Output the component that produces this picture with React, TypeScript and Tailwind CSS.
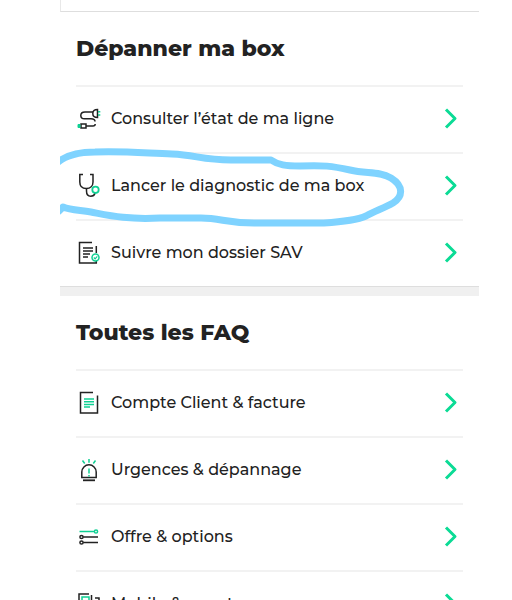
import type { ReactNode } from "react";

type FaqItem = {
  label: string;
  icon: ReactNode;
  highlighted?: boolean;
};

const INK = "#222222";
const GREEN = "#0fd093";

function Icon({ children }: { children: ReactNode }) {
  return (
    <svg
      viewBox="0 0 26 26"
      className="h-[26px] w-[26px] shrink-0"
      fill="none"
      stroke={INK}
      strokeWidth="1.5"
      aria-hidden="true"
    >
      {children}
    </svg>
  );
}

const CableIcon = (
  <Icon>
    <path d="M17 6H9C6 6 4.800 7.500 4.800 9.500s1.200 3.300 3.700 3.300H15c2.500 0 4 .7 4 2.800" />
    <path d="M21.500 3.500v8C18.500 11.500 16.800 10 16.800 7.500s1.700-4 4.700-4Z" />
    <path d="M22 5.800h2.300M22 9h2.300" stroke={GREEN} />
    <path d="M5 18h5v4H5zM10 20h7c1.500 0 2.200-.5 2.200-2" />
    <path d="M2 18.500h2v3H2z" fill={GREEN} stroke={GREEN} strokeWidth="1" />
  </Icon>
);

const StethoscopeIcon = (
  <Icon>
    <path d="M7 1.500H3.800V9c0 4 2.500 6.500 6.500 6.500S17 13 17 9V1.500h-3" />
    <path d="M10.500 15.500V18c0 3.500 1.500 5.200 4.200 5.200 2.300 0 3.800-1 4.300-3" />
    <circle cx="19.500" cy="16.800" r="3.200" stroke={GREEN} strokeWidth="1.800" />
  </Icon>
);

const FileCheckIcon = (
  <Icon>
    <path d="M16 2.500H3.500V23h16.800v-2M20.300 6v7M7 8h10M7 11h10M7 14h7M7 17h5" />
    <circle cx="19.500" cy="17.500" r="3.500" fill="white" stroke={GREEN} />
    <path d="m17.800 17.500 1.300 1.300 2.200-2.400" stroke={GREEN} strokeWidth="1.200" />
  </Icon>
);

const InvoiceIcon = (
  <Icon>
    <path d="M17 2.500H4.500V23h17V5.500" />
    <path d="M8 9h10M8 11.700h10M8 14.400h10M8 17h6" stroke={GREEN} />
  </Icon>
);

const SirenIcon = (
  <Icon>
    <path d="M5.800 20.500V15a7.200 7.200 0 0 1 14.400 0v5.500Z" />
    <path d="M7 23.300h12" strokeWidth="1.800" />
    <path
      d="M13 11.500v5M13 18v1.500M13 2v3.800M6.500 3.500l2.200 3M19.500 3.500l-2.200 3"
      stroke={GREEN}
    />
  </Icon>
);

const OptionsIcon = (
  <Icon>
    <path d="M3.500 7.500H18" stroke={GREEN} />
    <circle cx="20" cy="7.500" r="1.600" stroke={GREEN} />
    <circle cx="5.500" cy="13" r="1.600" />
    <circle cx="5.500" cy="18.500" r="1.600" />
    <path d="M7.200 13H22M7.200 18.500H22" />
  </Icon>
);

const DevicesIcon = (
  <Icon>
    <path d="M13 3H3v20.500h10M15.500 4v9M19 7h4v16.500h-7V11.500" />
    <path d="M6 13V6h7v7" stroke={GREEN} />
  </Icon>
);

const REPAIR_ITEMS: FaqItem[] = [
  { label: "Consulter l’état de ma ligne", icon: CableIcon },
  {
    label: "Lancer le diagnostic de ma box",
    icon: StethoscopeIcon,
    highlighted: true,
  },
  { label: "Suivre mon dossier SAV", icon: FileCheckIcon },
];

const FAQ_ITEMS: FaqItem[] = [
  { label: "Compte Client & facture", icon: InvoiceIcon },
  { label: "Urgences & dépannage", icon: SirenIcon },
  { label: "Offre & options", icon: OptionsIcon },
  { label: "Mobile & smart", icon: DevicesIcon },
];

// Hand-drawn marker loop, open on its left side
function MarkerLoop() {
  return (
    <svg
      viewBox="0 0 346 80"
      className="pointer-events-none absolute -left-4 -top-1.5 z-10 h-20 w-[346px]"
      fill="none"
      stroke="#7fd3ff"
      strokeWidth="7"
      strokeLinecap="round"
      strokeLinejoin="round"
      aria-hidden="true"
    >
      <path d="M-3 15C6 7 18 4 35 4C64 3 84 5 112 6C136 7 142 12 171 12H211C218 17 226 18 240 18C263 17 272 18 290 22C307 26 319 23 331 30C344 38 343 49 333 55C324 60 315 63 306 68C297 72 279 74 264 75H194C166 75 161 70 141 70H100C67 72 47 67 31 64C18 62 10 62 3 59L-1 63" />
    </svg>
  );
}

function FaqRow({ label, icon, highlighted }: FaqItem) {
  return (
    <li className="relative border-t-2 border-[#f2f2f2]">
      <a
        href="#"
        className="flex h-[65px] items-center gap-[9px] pb-px text-[#222222]"
      >
        {icon}
        <span className="flex-1 whitespace-nowrap text-base font-medium">
          {label}
        </span>
        <svg
          viewBox="0 0 20 24"
          className="h-6 w-5 shrink-0"
          fill="none"
          stroke="#0bdb95"
          strokeWidth="3"
          strokeLinejoin="round"
          aria-hidden="true"
        >
          <path d="m3 2.500 9 9-9 9" />
        </svg>
      </a>
      {highlighted && <MarkerLoop />}
    </li>
  );
}

function FaqSection({ title, items }: { title: string; items: FaqItem[] }) {
  return (
    <section className="px-4">
      <h2 className="flex h-[73px] items-center text-[22px] font-extrabold text-[#222222]">
        {title}
      </h2>
      <ul>
        {items.map((item) => (
          <FaqRow key={item.label} {...item} />
        ))}
      </ul>
    </section>
  );
}

export default function App() {
  return (
    <div className="h-screen overflow-hidden bg-white pl-[60px] pr-[33px] font-['Montserrat','Inter',sans-serif]">
      <main className="h-full overflow-hidden">
        <div className="h-3 border-b border-l border-b-[#dedede] border-l-[#e8e8e8]" />
        <FaqSection title="Dépanner ma box" items={REPAIR_ITEMS} />
        <div className="h-2.5 border-t border-[#dedede] bg-[#f0f0f0]" />
        <FaqSection title="Toutes les FAQ" items={FAQ_ITEMS} />
      </main>
    </div>
  );
}
